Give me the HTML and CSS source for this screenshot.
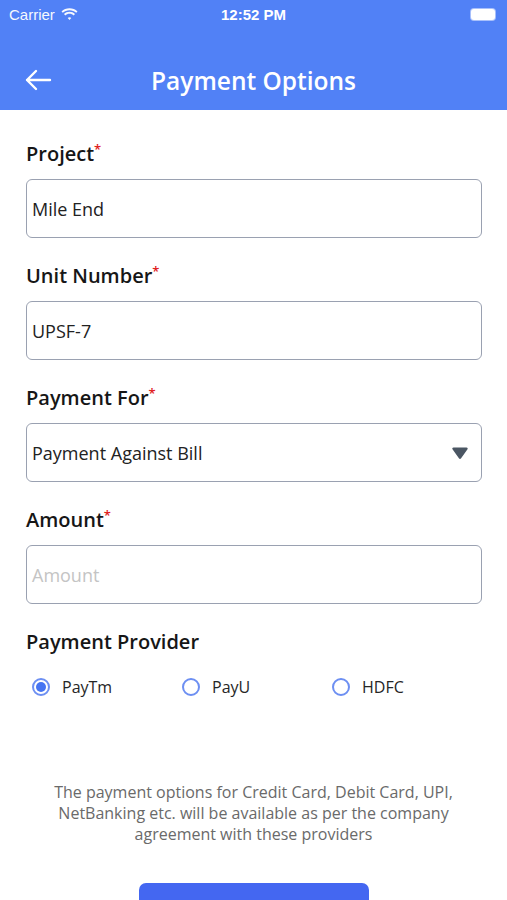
FILE: index.html
```html
<!DOCTYPE html>
<html lang="en">

<head>
    <meta charset="UTF-8">
    <meta name="viewport" content="width=device-width, initial-scale=1.0">
    <title>Payment Options</title>
    <link rel="stylesheet" href="styles.css">
</head>

<body>
    <div class="header">
        <div class="status-bar">
            <div class="carrier">
                <span>Carrier</span>
                <svg class="wifi" width="17" height="13" viewBox="0 0 17 13">
                    <path d="M8.5 2.2c2.6 0 4.9 1 6.7 2.6l1.3-1.4C14.4 1.4 11.6.2 8.5.2S2.6 1.4.5 3.4l1.3 1.4C3.6 3.2 5.9 2.2 8.5 2.2z" fill="#fff"/>
                    <path d="M8.5 5.8c1.6 0 3.1.6 4.2 1.6l1.3-1.4C12.6 4.6 10.6 3.8 8.5 3.8S4.4 4.6 3 6l1.3 1.4c1.1-1 2.6-1.6 4.2-1.6z" fill="#fff"/>
                    <path d="M8.5 9.3c.7 0 1.3.2 1.8.6L8.5 12 6.7 9.9c.5-.4 1.1-.6 1.8-.6z" fill="#fff"/>
                </svg>
            </div>
            <div class="clock">12:52 PM</div>
            <div class="battery"><span class="battery-level"></span></div>
        </div>
        <div class="nav-bar">
            <svg class="back" width="28" height="22" viewBox="0 0 28 22">
                <path d="M26 11H3M12 2L3 11l9 9" fill="none" stroke="#fff" stroke-width="2.4" stroke-linecap="round" stroke-linejoin="round"/>
            </svg>
            <div class="title">Payment Options</div>
        </div>
    </div>

    <div class="form">
        <div class="field">
            <div class="label">Project<span class="req">*</span></div>
            <div class="input">Mile End</div>
        </div>
        <div class="field">
            <div class="label">Unit Number<span class="req">*</span></div>
            <div class="input">UPSF-7</div>
        </div>
        <div class="field">
            <div class="label">Payment For<span class="req">*</span></div>
            <div class="input select">
                <span>Payment Against Bill</span>
                <svg width="18" height="14" viewBox="0 0 18 14">
                    <path d="M2.5 1.5h13c1 0 1.5 1 1 1.8l-6.4 9c-.6.8-1.6.8-2.2 0l-6.4-9c-.5-.8 0-1.8 1-1.8z" fill="#4b5663"/>
                </svg>
            </div>
        </div>
        <div class="field">
            <div class="label">Amount<span class="req">*</span></div>
            <div class="input placeholder">Amount</div>
        </div>
        <div class="field">
            <div class="label">Payment Provider</div>
            <div class="radios">
                <div class="radio checked"><span class="dot"></span>PayTm</div>
                <div class="radio"><span class="dot"></span>PayU</div>
                <div class="radio"><span class="dot"></span>HDFC</div>
            </div>
        </div>
    </div>

    <p class="note">The payment options for Credit Card, Debit Card, UPI, NetBanking etc. will be available as per the company agreement with these providers</p>

    <div class="actions">
        <div class="button"></div>
    </div>
</body>

</html>
```

FILE: styles.css
```css
body {
    margin: 0;
    padding: 0;
    background: #ffffff;
    font-family: "Open Sans", "Lato", sans-serif;
    color: #1b1b1b;
    width: 507px;
    height: 900px;
    overflow: hidden;
}

.header {
    background-color: #5181f6;
    height: 110px;
    color: white;
}

.status-bar {
    height: 29px;
    display: flex;
    align-items: center;
    justify-content: space-between;
    padding: 0 9px;
    font-family: "Liberation Sans", sans-serif;
    font-size: 15px;
}

.carrier {
    display: flex;
    align-items: center;
    gap: 6px;
    width: 110px;
    opacity: 0.95;
}

.clock {
    font-weight: bold;
    font-size: 15px;
}

.battery {
    width: 110px;
    display: flex;
    justify-content: flex-end;
}

.battery-level {
    display: block;
    width: 24px;
    height: 11px;
    background: #fff;
    border-radius: 3px;
    box-shadow: 0 0 0 1px rgba(255, 255, 255, 0.5);
    margin-right: 3px;
}

.nav-bar {
    height: 60px;
    margin-top: 21px;
    display: flex;
    align-items: center;
    padding: 0 0 0 24px;
    position: relative;
}

.title {
    position: absolute;
    left: 0;
    right: 0;
    text-align: center;
    font-size: 24.5px;
    font-weight: 600;
    pointer-events: none;
}

.form {
    padding: 32px 25px 0 26px;
}

.field {
    margin-bottom: 26px;
}

.label {
    font-size: 20px;
    font-weight: 600;
    line-height: 24px;
    color: #161616;
}

.req {
    color: #e02020;
    font-size: 13px;
    vertical-align: top;
    line-height: 14px;
}

.input {
    margin-top: 13px;
    height: 57px;
    border: 1px solid #9aa1b1;
    border-radius: 6px;
    display: flex;
    align-items: center;
    padding: 0 12px 0 5px;
    font-size: 18px;
    color: #222;
}

.select {
    justify-content: space-between;
}

.placeholder {
    color: #c4c4c4;
}

.radios {
    display: flex;
    margin-top: 22px;
    padding-left: 6px;
}

.radio {
    width: 150px;
    display: flex;
    align-items: center;
    gap: 12px;
    font-size: 16px;
    color: #262626;
}

.dot {
    width: 14px;
    height: 14px;
    border: 2px solid #6d8ff2;
    border-radius: 50%;
    box-sizing: content-box;
    position: relative;
}

.checked .dot::after {
    content: "";
    position: absolute;
    left: 2px;
    top: 2px;
    width: 10px;
    height: 10px;
    border-radius: 50%;
    background: #4674f2;
}

.note {
    margin: 84px auto 0;
    width: 420px;
    text-align: center;
    font-size: 16px;
    line-height: 21px;
    color: #6a6a6a;
}

.actions {
    display: flex;
    justify-content: center;
    margin-top: 38px;
}

.button {
    width: 230px;
    height: 50px;
    background: #4467f1;
    border-radius: 7px;
    margin-left: 1px;
}
```
